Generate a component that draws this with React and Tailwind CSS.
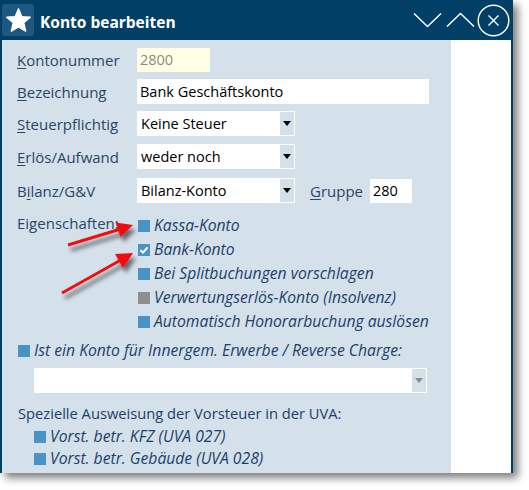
import React from "react";

const font = "font-['Open_Sans',sans-serif]";

function Box({ color = "bg-[#4a93c6]", checked = false }) {
  return (
    <span className={`relative inline-block w-[12px] h-[12px] shrink-0 ${color}`}>
      {checked && (
        <svg viewBox="0 0 12 12" className="absolute inset-0 w-[12px] h-[12px]">
          <path d="M2.5 6.3 L5 8.6 L9.6 3.4" fill="none" stroke="#fff" strokeWidth="2" />
        </svg>
      )}
    </span>
  );
}

function Select({ value, w, muted = false }) {
  return (
    <div className={`flex h-[25px] ${w} border border-white bg-white`}>
      <div className="flex-1 pl-[3px] text-[14.5px] leading-[23px] text-black">{value}</div>
      <div className="w-[14px] bg-[#d4e0ea] flex items-center justify-center">
        <svg width="8" height="5" viewBox="0 0 8 5">
          <path d="M0 0 H8 L4 5 Z" fill={muted ? "#8a8a8a" : "#000"} />
        </svg>
      </div>
    </div>
  );
}

function Label({ u, rest, pre = "" }) {
  return (
    <span className="text-[15px] text-[#2a4766]">
      {pre}
      <span className="underline underline-offset-2">{u}</span>
      {rest}
    </span>
  );
}

function Check({ text, color, checked }) {
  return (
    <div className="flex items-center h-[24px] gap-[4px]">
      <Box color={color} checked={checked} />
      <span className="italic text-[15.7px] text-[#1d3f6a]">{text}</span>
    </div>
  );
}

export default function App() {
  return (
    <div className={`relative w-[529px] h-[490px] bg-white overflow-hidden ${font}`}>
      <div className="flex flex-col w-[513px] h-[473px] shadow-[5px_5px_8px_rgba(0,0,0,0.5)]">
        {/* title bar */}
        <div className="flex items-center h-[40px] bg-[#023f66] shrink-0">
          <div className="ml-[2px] w-[32px] h-[32px] rounded-[3px] bg-[#1e5882] flex items-center justify-center">
            <svg width="27" height="27" viewBox="0 0 24 24">
              <path
                d="M12 1.6 L14.9 8.5 L22.4 9.1 L16.7 14.1 L18.4 21.5 L12 17.6 L5.6 21.5 L7.3 14.1 L1.6 9.1 L9.1 8.5 Z"
                fill="#fff"
                stroke="#fff"
                strokeWidth="1.2"
                strokeLinejoin="round"
              />
            </svg>
          </div>
          <div className="ml-[6px] mt-[5px] text-white font-bold text-[15.5px]">Konto bearbeiten</div>
          <div className="ml-auto flex items-center mr-[3px]">
            <svg width="30" height="16" viewBox="0 0 30 16">
              <path d="M1 1.5 L14.5 14.5 L28 1.5" fill="none" stroke="#fff" strokeWidth="1.5" />
            </svg>
            <svg width="30" height="16" viewBox="0 0 30 16" className="ml-[3px]">
              <path d="M1 14.5 L14.5 1.5 L28 14.5" fill="none" stroke="#fff" strokeWidth="1.5" />
            </svg>
            <svg width="33" height="33" viewBox="0 0 33 33" className="ml-[1px]">
              <circle cx="16.5" cy="16.5" r="15.3" fill="none" stroke="#fff" strokeWidth="1.4" />
              <path d="M11.5 11.5 L21.5 21.5 M21.5 11.5 L11.5 21.5" stroke="#fff" strokeWidth="1.4" />
            </svg>
          </div>
        </div>
        {/* body */}
        <div className="flex flex-1 border-l-2 border-r-2 border-[#023f66]">
          <div className="w-[449px] bg-[#d4e0ea] pl-[15px] flex flex-col">
            <div className="flex items-center h-[24px] mt-[8px]">
              <div className="w-[120px]"><Label u="K" rest="ontonummer" /></div>
              <div className="w-[73px] h-[24px] bg-[#ffffe4] pl-[3px] text-[14.5px] leading-[24px] text-[#8a8a8a]">2800</div>
            </div>
            <div className="flex items-center h-[25px] mt-[7px]">
              <div className="w-[120px]"><Label u="B" rest="ezeichnung" /></div>
              <div className="w-[292px] h-[25px] bg-white pl-[3px] text-[14.5px] leading-[25px] text-black">Bank Geschäftskonto</div>
            </div>
            <div className="flex items-center h-[25px] mt-[7px]">
              <div className="w-[120px]"><Label u="S" rest="teuerpflichtig" /></div>
              <Select value="Keine Steuer" w="w-[158px]" />
            </div>
            <div className="flex items-center h-[25px] mt-[8px]">
              <div className="w-[120px]"><Label u="E" rest="rlös/Aufwand" /></div>
              <Select value="weder noch" w="w-[158px]" />
            </div>
            <div className="flex items-center h-[25px] mt-[9px]">
              <div className="w-[120px]"><Label pre="B" u="i" rest="lanz/G&V" /></div>
              <Select value="Bilanz-Konto" w="w-[158px]" />
              <div className="ml-[15px] w-[60px]"><Label u="G" rest="ruppe" /></div>
              <div className="w-[42px] h-[24px] bg-white pl-[3px] text-[14.5px] leading-[24px] text-black">280</div>
            </div>
            <div className="flex mt-[11px]">
              <div className="w-[120px] -mt-[3px] leading-[24px]">
                <span className="text-[15px] text-[#2a4766]">Eigenschaften:</span>
              </div>
              <div className="flex flex-col pl-[1px]">
                <Check text="Kassa-Konto" />
                <Check text="Bank-Konto" checked />
                <Check text="Bei Splitbuchungen vorschlagen" />
                <Check text="Verwertungserlös-Konto (Insolvenz)" color="bg-[#8e8e8e]" />
                <Check text="Automatisch Honorarbuchung auslösen" />
              </div>
            </div>
            <div className="mt-[5px] pl-[1px]">
              <Check text="Ist ein Konto für Innergem. Erwerbe / Reverse Charge:" />
            </div>
            <div className="mt-[5px] ml-[17px]">
              <Select value="" w="w-[393px]" muted />
            </div>
            <div className="mt-[8px] h-[24px] leading-[24px] pl-[1px] text-[14.7px] text-[#1d3f6a]">
              Spezielle Ausweisung der Vorsteuer in der UVA:
            </div>
            <div className="ml-[17px] flex flex-col mt-[1px]">
              <div className="h-[22px] flex items-center"><Check text="Vorst. betr. KFZ (UVA 027)" /></div>
              <div className="h-[22px] flex items-center"><Check text="Vorst. betr. Gebäude (UVA 028)" /></div>
            </div>
          </div>
          <div className="flex-1 bg-white" />
        </div>
      </div>
      {/* red arrows overlay */}
      <svg className="absolute left-0 top-0 pointer-events-none" width="529" height="490" viewBox="0 0 529 490">
        <defs>
          <filter id="sh" x="-20%" y="-20%" width="160%" height="160%">
            <feDropShadow dx="3" dy="5" stdDeviation="2" floodColor="#000" floodOpacity="0.55" />
          </filter>
        </defs>
        <g filter="url(#sh)">
          <line x1="68" y1="245" x2="119" y2="229.5" stroke="#f01010" strokeWidth="3" />
          <polygon points="133,225 120.5,237 115.5,222.5" fill="#f01010" />
          <line x1="62" y1="293" x2="120" y2="260.5" stroke="#f01010" strokeWidth="3" />
          <polygon points="133,253 123,268 115,254" fill="#f01010" />
        </g>
      </svg>
    </div>
  );
}
